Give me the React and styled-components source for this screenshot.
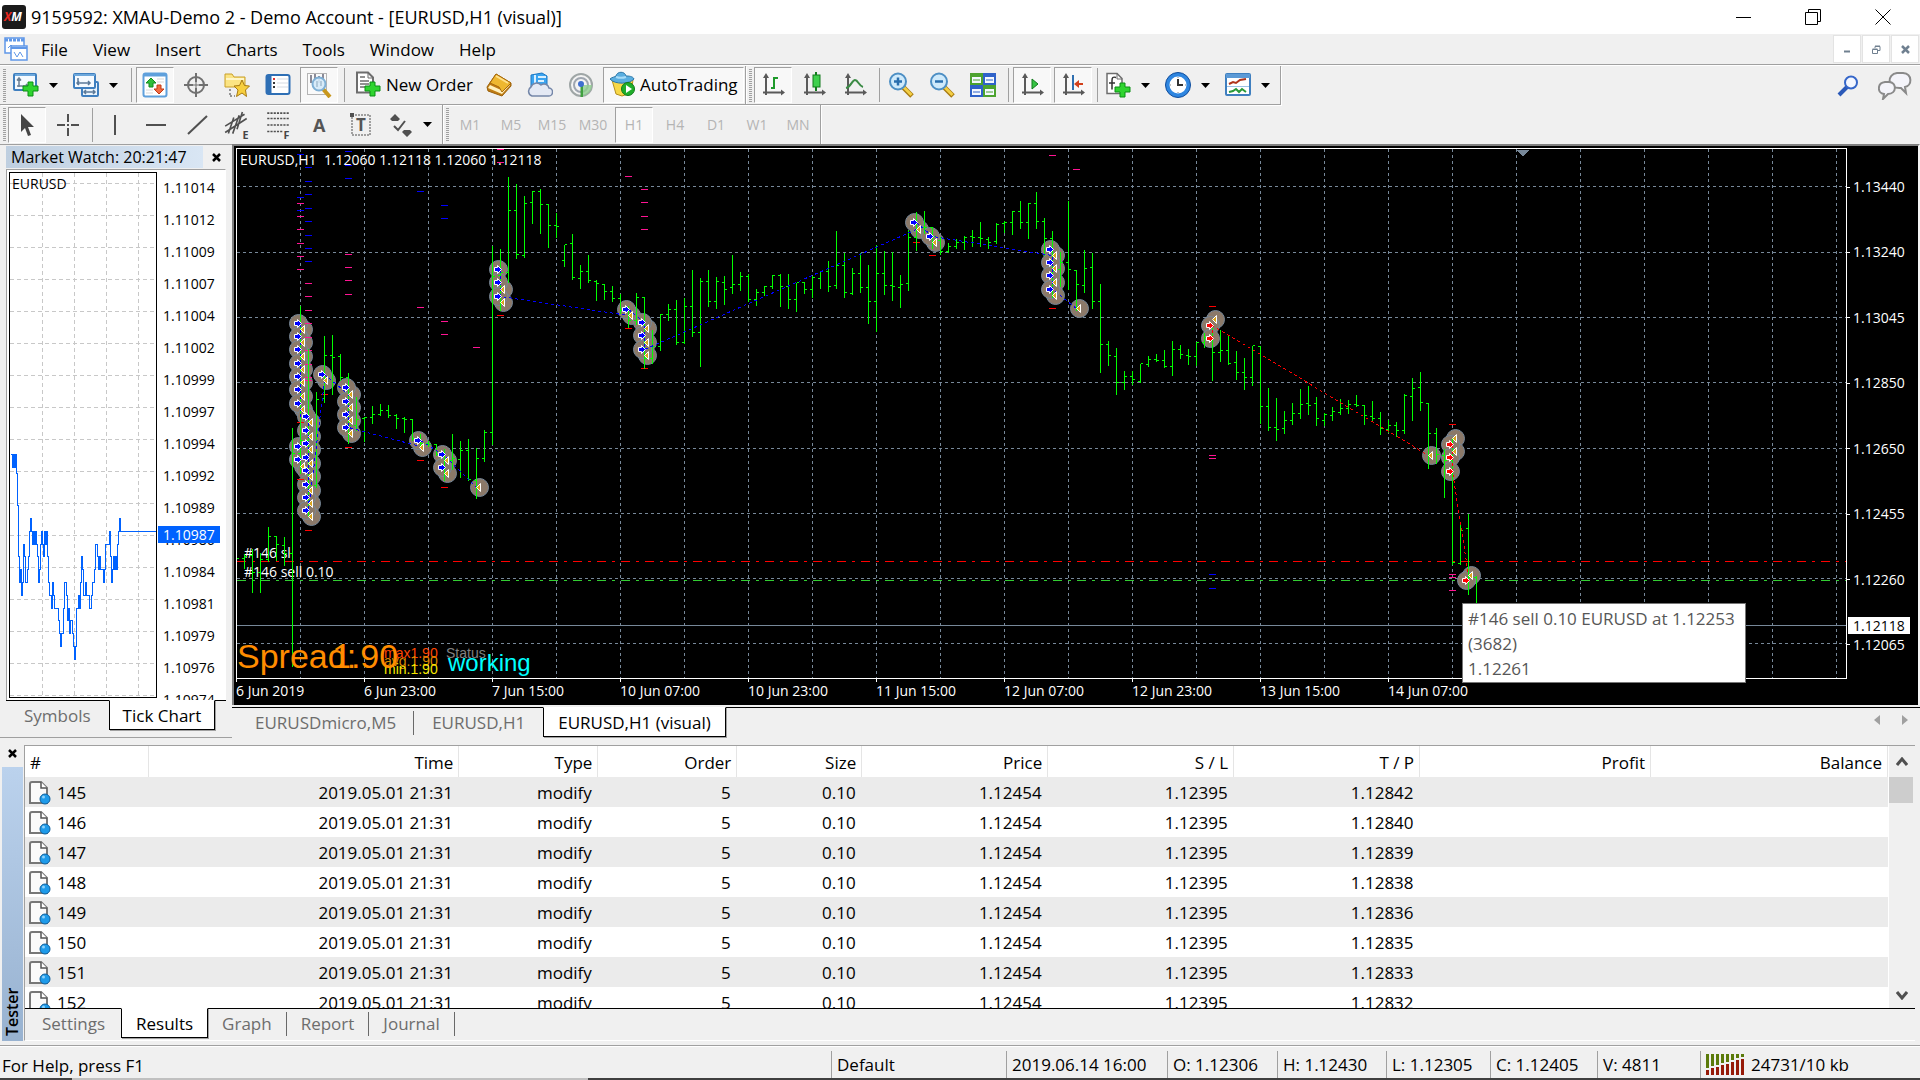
import React, {useState} from 'react';
import styled, {createGlobalStyle} from 'styled-components';

const GlobalStyle = createGlobalStyle`
  * { box-sizing: border-box; }
  body {
    margin: 0;
    background: #f0f0f0;
    color: #000;
    font-family: "Open Sans", "Noto Sans", sans-serif;
    font-size: 17px;
  }
  button {
    font: inherit;
    color: inherit;
    background: none;
    border: 0;
    padding: 0;
  }
  svg { display: block; flex: none; }
`;

const Page = styled.div`
  display: flex;
  flex-direction: column;
  height: 100vh;
  min-height: 700px;
  overflow: hidden;
`;

const TitleBar = styled.header`
  display: flex;
  align-items: center;
  height: 34px;
  flex: none;
  padding: 0 2px;
  background: #fff;
`;

const Title = styled.h1`
  flex: 1;
  margin: 0 0 0 5px;
  font-size: 18px;
  font-weight: 400;
  white-space: nowrap;
`;

const WindowButton = styled.button`
  display: flex;
  align-items: center;
  justify-content: center;
  width: 70px;
  height: 34px;
`;

const MenuBar = styled.nav`
  display: flex;
  align-items: center;
  height: 30px;
  flex: none;
  padding-left: 4px;
`;

const MenuItem = styled.button`
  padding: 2px 12px 0 13px;
  line-height: 28px;
`;

const Spacer = styled.div`
  flex: 1;
`;

const MdiButton = styled.button`
  display: flex;
  align-items: center;
  justify-content: center;
  width: 28px;
  height: 28px;
  margin-right: 1px;
  background: #fff;
  border: 1px solid #e3e3e3;
`;

const ToolRow = styled.div`
  display: flex;
  flex: none;
  height: ${p => p.$first ? 41 : 39}px;
  border-top: ${p => p.$first ? '1px solid #a0a0a0' : 'none'};
  box-shadow: ${p => p.$first ? 'inset 0 1px #fff' : 'none'};
  padding-top: ${p => p.$first ? 1 : 0}px;
`;

const ToolGroup = styled.div`
  display: flex;
  align-items: center;
  border-right: 1px solid #a0a0a0;
  border-bottom: ${p => p.$line ? '1px solid #a0a0a0' : 'none'};
  box-shadow: 1px 1px #fff;
`;

const Grip = styled.div`
  width: 3px;
  height: 33px;
  margin: 0 2px 0 3px;
  background: repeating-linear-gradient(#a0a0a0 0 1px, #f0f0f0 1px 2px);
`;

const ToolButton = styled.button`
  display: flex;
  align-items: center;
  justify-content: center;
  gap: 5px;
  min-width: 38px;
  height: 36px;
  margin-right: ${p => p.$text ? 1 : 3}px;
  padding: ${p => p.$text ? '0 5px 2px' : 0};
  border: 1px solid transparent;
  white-space: nowrap;
  ${p => p.$pressed && `
    background: #f8f8f8;
    border-color: #a0a0a0 #fff #fff #a0a0a0;
  `}
`;

const DropTool = styled.button`
  display: flex;
  align-items: center;
  gap: 10px;
  height: 36px;
  padding: 0 10px 0 5px;
`;

const Divider = styled.div`
  width: 1px;
  height: 34px;
  margin: 0 ${p => p.$wide ? 4 : 2}px 0 ${p => p.$wide ? 3 : 2}px;
  background: #a0a0a0;
`;

const Period = styled(ToolButton)`
  font-size: 14px;
  color: #b4b4b4;
`;

const SideTools = styled.div`
  display: flex;
  align-items: center;
  gap: 19px;
  margin-left: auto;
  padding-right: 8px;
`;

const Workspace = styled.main`
  display: flex;
  flex: 1;
  min-height: 0;
`;

const Watch = styled.section`
  display: flex;
  flex-direction: column;
  width: 232px;
  flex: none;
  margin-bottom: 2px;
  padding: 1px 6px 6px;
  border-top: 1px solid #a0a0a0;
  border-bottom: 1px solid #a0a0a0;
`;

const WatchHead = styled.div`
  display: flex;
  justify-content: space-between;
  align-items: center;
  height: 22px;
  flex: none;
  margin-bottom: 1px;
`;

const WatchTitle = styled.h2`
  width: 197px;
  margin: 0;
  padding-left: 5px;
  font-size: 16px;
  font-weight: 400;
  line-height: 22px;
  background: linear-gradient(90deg, #bfcfe0, #d9e6f4);
  white-space: nowrap;
`;

const CloseButton = styled.button`
  display: flex;
  align-items: center;
  justify-content: center;
  width: 20px;
  height: 20px;
`;

const WatchBody = styled.div`
  display: flex;
  flex: 1;
  min-height: 0;
  padding: 2px 0 2px 2px;
  overflow: hidden;
  background: #fff;
  border: 1px solid #a0a0a0;
  border-right-color: #fff;
  border-bottom: 0;
`;

const TickPlot = styled.div`
  flex: 1;
  overflow: hidden;
  border: 1px solid #000;
`;

const TickAxis = styled.div`
  position: relative;
  width: 68px;
  padding-left: 6px;
  font-size: 14px;
  line-height: 32px;
`;

const TickBadge = styled.div`
  position: absolute;
  left: 1px;
  top: 354px;
  width: 62px;
  padding-left: 5px;
  line-height: 17px;
  color: #fff;
  background: #0062ff;
`;

const TabBar = styled.div`
  display: flex;
  align-items: flex-start;
  height: ${p => p.$height}px;
  flex: none;
  padding-left: ${p => p.$inset || 0}px;
  border-top: 1px solid #000;
`;

const Tab = styled.button`
  height: 30px;
  margin-top: ${p => p.$active ? -1 : 0}px;
  padding: ${p => p.$active ? 1 : 0}px ${p => p.$pad}px 0;
  line-height: 26px;
  white-space: nowrap;
  color: ${p => p.$active ? '#000' : '#6d6d6d'};
  ${p => p.$active && `
    background: #fff;
    border: 1px solid #000;
    border-top-color: #fff;
    box-shadow: 1px 1px #a0a0a0;
  `}
  ${p => p.$line && `
    height: 24px;
    margin-top: 3px;
    line-height: 22px;
    border-right: 1px solid #696969;
  `}
`;

const ChartPane = styled.section`
  display: flex;
  flex-direction: column;
  flex: 1;
  min-width: 0;
`;

const ChartWindow = styled.div`
  position: relative;
  display: grid;
  grid-template-columns: 1fr 71px;
  grid-template-rows: 1fr 26px;
  flex: 1;
  min-height: 0;
  margin-bottom: 2px;
  padding: 2px 0 0 2px;
  background: #000;
  border-top: 2px solid #808080;
  border-left: 2px solid #808080;
  border-right: 2px solid #f4f4f4;
  color: #fff;
  font-size: 14px;
`;

const Plot = styled.div`
  min-width: 0;
  overflow: hidden;
`;

const PriceAxis = styled.div`
  position: relative;
  display: flex;
  flex-direction: column;
  justify-content: space-between;
  padding: 29px 0 24px;
  line-height: 20px;
`;

const Price = styled.div`
  display: flex;
  align-items: center;
  gap: 3px;
  &::before {
    content: '';
    width: 3px;
    height: 1px;
    background: #fff;
  }
`;

const PriceBadge = styled.div`
  position: absolute;
  left: 1px;
  bottom: 45px;
  width: 62px;
  padding-left: 5px;
  line-height: 17px;
  color: #000;
  background: #fff;
`;

const TimeAxis = styled.div`
  display: flex;
  overflow: hidden;
`;

const Time = styled.div`
  width: 128px;
  flex: none;
  line-height: 17px;
  &::before {
    content: '';
    display: block;
    width: 1px;
    height: 3px;
    background: #fff;
  }
`;

const Tooltip = styled.div`
  position: absolute;
  left: 1228px;
  top: 457px;
  width: 284px;
  padding: 2px 5px 1px;
  font-size: 17px;
  line-height: 25px;
  color: #575757;
  background: #fff;
  border: 1px solid #767676;
  white-space: nowrap;
`;

const TabScroll = styled.div`
  display: flex;
  gap: 8px;
  margin: 2px 5px 0 auto;
`;

const Tester = styled.section`
  display: flex;
  height: 301px;
  flex: none;
  margin: 0 5px 4px 0;
`;

const TesterSide = styled.div`
  display: flex;
  flex-direction: column;
  align-items: center;
  width: 24px;
  flex: none;
  padding-top: 3px;
`;

const TesterLabel = styled.h2`
  flex: 1;
  width: 21px;
  margin: 4px 0 0;
  padding-top: 5px;
  writing-mode: vertical-rl;
  transform: rotate(180deg);
  font-size: 16px;
  font-weight: 600;
  line-height: 21px;
  background: linear-gradient(0deg, #bbd2ed, #98b2d0);
`;

const TesterMain = styled.div`
  display: flex;
  flex-direction: column;
  flex: 1;
  min-width: 0;
  margin-top: 5px;
  border-top: 1px solid #a0a0a0;
  border-left: 1px solid #a0a0a0;
  border-bottom: 1px solid #fff;
`;

const TableArea = styled.div`
  display: flex;
  flex: 1;
  min-height: 0;
  overflow: hidden;
  background: #fff;
`;

const Table = styled.table`
  flex: 1;
  height: 0;
  table-layout: fixed;
  border-collapse: collapse;
  th {
    height: 31px;
    padding: 2px 5px 0;
    font-weight: 400;
    text-align: right;
    border-right: 1px solid #e5e5e5;
  }
  td {
    height: 30px;
    padding: 2px 6px 0;
    text-align: right;
    line-height: 28px;
  }
  th:first-child { text-align: left; }
  td:first-child { padding: 2px 3px 0; }
  tbody tr:nth-child(odd) { background: #ebebeb; }
`;

const RowName = styled.div`
  display: flex;
  align-items: center;
  gap: 6px;
`;

const ScrollBar = styled.div`
  display: flex;
  flex-direction: column;
  width: 26px;
  margin-left: 1px;
  background: #f0f0f0;
`;

const ScrollButton = styled.button`
  display: flex;
  align-items: center;
  justify-content: center;
  height: ${p => p.$low ? 27 : 31}px;
`;

const Thumb = styled.div`
  height: 26px;
  margin-right: 2px;
  background: #cdcdcd;
`;

const StatusBar = styled.footer`
  display: flex;
  height: 33px;
  flex: none;
  padding-top: 5px;
  border-top: 1px solid #a0a0a0;
  box-shadow: inset 0 1px #fff;
`;

const Cell = styled.div`
  display: flex;
  align-items: center;
  gap: 7px;
  width: ${p => p.$width}px;
  padding-left: 5px;
  border-left: 1px solid #a0a0a0;
  white-space: nowrap;
`;

const Help = styled.div`
  flex: 1;
  padding-left: 2px;
  line-height: 29px;
`;

const Edge = styled.div`
  height: 2px;
  flex: none;
  background: linear-gradient(90deg, #404040 72px, #c0c0c0 72px 588px, #404040 588px);
`;

/* icons */

const Icon = ({children, size = 26}) => (
  <svg width={size} height={size} viewBox="0 0 26 26" fill="none" aria-hidden="true">{children}</svg>
);

const Arrow = () => <svg width="9" height="5" aria-hidden="true"><path d="M0 0h9L4.500 5z" /></svg>;

const Plus = ({x = 10, y = 9}) => (
  <path transform={`translate(${x} ${y})`} d="M5 1h5v4h5v5h-5v5H5v-5H0V5h5z" fill="#2fd42f" stroke="#0a8f14" />
);

const Axes = ({children}) => (
  <Icon>
    <path d="M6 3v20M3 20.500h19" stroke="#5a5a5a" strokeWidth="2" />
    <path d="M6 1l-3 5h6zM25 20.500l-4-3v6z" fill="#5a5a5a" />
    {children}
  </Icon>
);

const Lens = ({minus}) => (
  <Icon>
    <path d="M15 15l9 9" stroke="#a87a10" strokeWidth="5" />
    <path d="M15.500 15l8 8" stroke="#f3cf45" strokeWidth="3" />
    <circle cx="10" cy="9.500" r="8" fill="#cfeafb" stroke="#4d8fc4" strokeWidth="2" />
    <path d={minus ? 'M6 9.500h8' : 'M6 9.500h8M10 5.500v8'} stroke="#2a6fae" strokeWidth="2.500" />
  </Icon>
);

const NewChart = () => (
  <Icon>
    <rect x="1" y="2" width="22" height="16" rx="1" fill="#f5faff" stroke="#3f7fbf" strokeWidth="2" />
    <path d="M2 3h20" stroke="#6da8dc" strokeWidth="2" />
    <path d="M6 6v9M4 8.500L6 6l2 2.500M4 14h11M13 12l2 2-2 2" stroke="#6c7f92" strokeWidth="1.500" />
    <Plus />
  </Icon>
);

const Profiles = () => (
  <Icon>
    <rect x="9" y="10" width="16" height="14" rx="1" fill="#eaf4fd" stroke="#3f7fbf" strokeWidth="2" />
    <path d="M11 20h11M20 18l2 2-2 2M13 18l-2 2 2 2" stroke="#5c7a99" strokeWidth="1.500" />
    <rect x="1" y="2" width="21" height="14" rx="1" fill="#f5faff" stroke="#3f7fbf" strokeWidth="2" />
    <path d="M1 3h21" stroke="#6da8dc" strokeWidth="2" />
    <path d="M5 6v7M4 11h13M6 9l-2 2 2 2M15 9l2 2-2 2" stroke="#5c7a99" strokeWidth="1.500" />
  </Icon>
);

const MarketIcon = () => (
  <Icon>
    <rect x="1.500" y="1.500" width="23" height="23" rx="2" fill="#fff" stroke="#5fa0dc" strokeWidth="2" />
    <path d="M2 3h22" stroke="#5fa0dc" strokeWidth="3" />
    <path d="M15 7h7M15 10h7M4 18h7M4 21h7" stroke="#d7d7d7" />
    <path d="M9 6l5 5h-3v4H7v-4H4z" fill="#2fbf3a" stroke="#148a20" />
    <path d="M17 22l5-5h-3v-4h-4v4h-3z" fill="#f26a42" stroke="#c23a14" />
  </Icon>
);

const Target = () => (
  <Icon>
    <circle cx="13" cy="13" r="8" stroke="#707070" strokeWidth="2" />
    <path d="M13 1v24M1 13h24" stroke="#707070" strokeWidth="2" />
    <circle cx="13" cy="13" r="3" fill="#f0f0f0" />
    <path d="M13 9v8M9 13h8" stroke="#707070" />
  </Icon>
);

const Favourite = () => (
  <Icon>
    <path d="M1 2h7l2 3h11v10H1z" fill="#fbe483" stroke="#c99f28" />
    <path d="M2 7h18" stroke="#fff6c8" strokeWidth="2" />
    <path d="M6 17v8M6 24h5" stroke="#777" strokeWidth="1.500" strokeDasharray="2 2" />
    <path d="M18 8l2.500 5.500 5 .5-4 4 1 6.500-4.500-3.500-5.500 3.500 1.500-6.500-4-4 5.500-.5z" fill="#f7cf3e" stroke="#a77a12" />
  </Icon>
);

const Navigator = () => (
  <Icon>
    <rect x="1.500" y="3" width="23" height="19" rx="2" fill="#fff" stroke="#2e6fb5" strokeWidth="2" />
    <path d="M4 4v18" stroke="#2e6fb5" strokeWidth="5" />
    <path d="M8 7h2" stroke="#e03131" strokeWidth="2" />
    <path d="M8 11h2M8 15h2" stroke="#333" strokeWidth="2" />
    <path d="M12 7h11M12 11h11M12 15h11" stroke="#d6dbe2" />
  </Icon>
);

const DataWindow = () => (
  <Icon>
    <rect x="1.500" y="1.500" width="19" height="21" fill="#fafafa" stroke="#b4b4b4" />
    <path d="M5 3v8M9 2v7M13 4v7M17 2v6" stroke="#667" strokeWidth="1.500" />
    <path d="M17 17l7 8" stroke="#c8971c" strokeWidth="4" />
    <circle cx="13" cy="12" r="6.500" fill="#d4e9f8" fillOpacity=".9" stroke="#7fb0d6" strokeWidth="2" />
    <path d="M11 9v6M15 9v5" stroke="#8ba7bd" />
  </Icon>
);

const OrderIcon = () => (
  <Icon>
    <path d="M2 1.500h11l5 5v15H2z" fill="#fff" stroke="#6d6d6d" strokeWidth="2" />
    <path d="M13 1v6h5" stroke="#6d6d6d" />
    <path d="M5 6h5M5 10h9M5 13h9M5 16h5" stroke="#6d6d6d" strokeWidth="1.500" />
    <Plus x={10} y={10} />
  </Icon>
);

const Book = () => (
  <Icon>
    <path d="M10 2L1 15l1 4 14 5 9-10v-3z" fill="#c07c12" stroke="#9a610a" />
    <path d="M2 16l14 6 8-9-1-2-8 7-11-5z" fill="#fff0bd" />
    <path d="M10 2l15 9-9 9-3-5L4 11z" fill="#eeb730" stroke="#a8690d" />
    <path d="M10 4l12 7" stroke="#ffe08a" strokeWidth="2" />
  </Icon>
);

const Cloud = () => (
  <Icon>
    <path d="M4 3l11-2 5 3v11H4z" fill="#3ba4f0" stroke="#1c78c4" />
    <path d="M8 3v10M11 5h8M11 9h6" stroke="#d9f0ff" strokeWidth="2" />
    <path d="M5 24a5 5 0 01-1-9 6 6 0 0110-2 5 5 0 018 3 4 4 0 01-1 8z" fill="#e4e9f4" stroke="#7486a8" strokeWidth="1.500" />
  </Icon>
);

const Signal = () => (
  <Icon>
    <circle cx="13" cy="13" r="11" fill="#f3f3f3" stroke="#9fa6a6" strokeWidth="2" />
    <circle cx="13" cy="13" r="7" stroke="#9fa6b0" strokeWidth="2" />
    <path d="M13 13h11a11 11 0 01-10 11z" fill="#8fce8f" fillOpacity=".8" />
    <path d="M12.500 13v12h2.500V13z" fill="#3fa03f" />
    <circle cx="13" cy="12" r="3" fill="#3f6fd0" />
  </Icon>
);

const Expert = () => (
  <Icon>
    <path d="M3 9l4 14 6 2 9-3 2-13z" fill="#f7d848" stroke="#b58f1c" />
    <path d="M1 8c2-2 5-2 6-3 1-5 9-5 10 0 2 0 7 0 8 3-4 5-19 6-24 0z" fill="#5aaee0" stroke="#2c77a8" />
    <path d="M7 6c3 1 7 1 10 0" stroke="#a8dcf7" strokeWidth="2" />
    <circle cx="19" cy="18" r="6.500" fill="#1fae2a" stroke="#0d7a16" />
    <path d="M17 14l6 4-6 4z" fill="#fff" />
  </Icon>
);

const Tiles = () => (
  <Icon>
    {[[0, 1, '#4da32f'], [13, 1, '#2f62c9'], [0, 13, '#2f62c9'], [13, 13, '#4da32f']].map(([x, y, c]) => (
      <g key={`${x} ${y}`}>
        <rect x={x} y={y} width="13" height="12" fill={c} />
        <rect x={x + 2} y={y + 4} width="9" height="6" fill="#f4f8ff" />
        <path d={`M${x + 3} ${y + 7}h7`} stroke={c} />
      </g>
    ))}
  </Icon>
);

const Indicators = () => (
  <Icon>
    <path d="M2 1.500h10l5 5v15H2z" fill="#fff" stroke="#6d6d6d" strokeWidth="1.500" />
    <path d="M12 1v6h5" stroke="#6d6d6d" />
    <path d="M11 5.500c-3-1-4 0-4 3v9M4 11h6" stroke="#333" strokeWidth="1.500" />
    <Plus x={10} y={10} />
  </Icon>
);

const Clock = () => (
  <Icon>
    <circle cx="13" cy="13" r="10.500" fill="#fff" stroke="#2f86e0" strokeWidth="4" />
    <circle cx="13" cy="13" r="12.500" stroke="#0f4c9c" />
    <path d="M13 7v6h5" stroke="#333" strokeWidth="2" />
    <path d="M13 5v1M13 20v1M5 13h1M20 13h1" stroke="#888" />
  </Icon>
);

const Template = () => (
  <Icon>
    <rect x="1" y="2" width="24" height="21" rx="1" fill="#fff" stroke="#3f7fbf" strokeWidth="2" />
    <path d="M1 4h24" stroke="#5c9ad6" strokeWidth="4" />
    <path d="M2 14.500h22" stroke="#9cc3e6" />
    <path d="M4 12l4-2 3 1 4-3 6-1" stroke="#b0351b" strokeWidth="2" />
    <path d="M4 20l4-1 3-2 3 3 3-3 4 3" stroke="#2a9a3a" strokeWidth="2" />
  </Icon>
);

const Cursor = () => <Icon><path d="M7 2v18l4-4 3 8 3-1-3-8h6z" fill="#454545" /></Icon>;
const Cross = () => <Icon><path d="M13 2v8M13 16v8M2 13h8M16 13h8M12 13h2" stroke="#505050" strokeWidth="2" /></Icon>;
const VLine = () => <Icon><path d="M14 3v20" stroke="#505050" strokeWidth="2" /></Icon>;
const HLine = () => <Icon><path d="M4 13h20" stroke="#505050" strokeWidth="2" /></Icon>;
const Trend = () => <Icon><path d="M5 22L24 4" stroke="#505050" strokeWidth="2" /></Icon>;

const Channel = () => (
  <Icon size={28}>
    <path d="M2 14L20 3M2 20L22 7M5 21L10 6M9 21L15 4M13 17l5-16" stroke="#505050" strokeWidth="1.500" />
    <text x="18" y="26" fontSize="10" fontWeight="700" fill="#454545">E</text>
  </Icon>
);

const Fibo = () => (
  <Icon size={28}>
    <path d="M3 2h20M3 7h20M3 13h20M3 19h14" stroke="#505050" strokeWidth="1.500" strokeDasharray="2 1" />
    <text x="18" y="26" fontSize="10" fontWeight="700" fill="#454545">F</text>
  </Icon>
);

const Letter = () => <Icon><text x="7" y="20" fontSize="18" fontWeight="700" fill="#555">A</text></Icon>;

const Label = () => (
  <Icon>
    <rect x="5" y="3" width="18" height="20" stroke="#505050" strokeDasharray="2 1" />
    <path d="M3 1h4v4H3z" fill="#505050" />
    <text x="9" y="19" fontSize="17" fontWeight="700" fill="#555">T</text>
  </Icon>
);

const Shapes = () => (
  <Icon>
    <path d="M8 2l5 5-2 2H5L3 7zM20 25l-5-5 2-2h6l2 2z" fill="#505050" />
    <path d="M7 14l4 4 7-9" stroke="#505050" strokeWidth="2" />
  </Icon>
);

const Cross8 = ({color = '#000'}) => (
  <svg width="9" height="9" aria-hidden="true"><path d="M1 1l7 7M8 1L1 8" stroke={color} strokeWidth="2.500" /></svg>
);

const DocIcon = () => (
  <svg width="23" height="26" viewBox="0 0 23 26" fill="none" aria-hidden="true">
    <path d="M2 4a2 2 0 012-2h9l6 6v15H2z" fill="#fafafa" stroke="#777" strokeWidth="2" />
    <path d="M13 2v6h6" fill="#fff" stroke="#555" strokeWidth="1.500" />
    <circle cx="17" cy="19" r="5" fill="#1e9bea" stroke="#0f5f9c" />
    <circle cx="15.500" cy="17" r="1.500" fill="#8fd2fa" />
  </svg>
);

/* chart data: [high, low, open, close] on the vertical scale of the plot, one bar every 8px */
const TOP = 148;
const LEFT = 236;
const BARS = [
  [558, 569, 558, 558], [553, 568, 558, 556], [548, 592, 555, 572], [552, 592, 572, 559],
  [526, 561, 559, 536], [536, 560, 536, 544], [536, 565, 545, 553], [427, 666, 553, 453],
  [305, 473, 453, 440], [348, 516, 440, 485], [391, 487, 485, 399], [335, 402, 398, 355],
  [334, 394, 355, 357], [353, 380, 356, 377], [372, 443, 377, 425], [396, 430, 425, 419],
  [416, 441, 418, 417], [405, 423, 417, 414], [403, 415, 414, 410], [404, 417, 410, 415],
  [413, 428, 415, 418], [416, 432, 418, 419], [418, 440, 419, 438], [433, 448, 438, 443],
  [440, 446, 443, 444], [443, 455, 444, 454], [448, 480, 454, 460], [433, 469, 460, 458],
  [440, 477, 459, 450], [438, 480, 450, 479], [447, 498, 480, 458], [429, 461, 458, 432],
  [245, 444, 432, 276], [248, 310, 275, 272], [176, 282, 272, 210], [183, 258, 210, 254],
  [195, 257, 255, 203], [190, 223, 202, 191], [188, 233, 191, 204], [204, 247, 204, 225],
  [212, 237, 225, 226], [244, 266, 260, 244], [233, 279, 243, 277], [264, 288, 278, 271],
  [254, 282, 271, 280], [279, 300, 281, 283], [283, 299, 284, 291], [285, 301, 291, 298],
  [293, 313, 298, 310], [305, 327, 310, 320], [292, 324, 320, 297], [297, 368, 297, 358],
  [329, 363, 358, 346], [313, 350, 346, 314], [303, 320, 314, 309], [299, 344, 309, 342],
  [297, 343, 342, 306], [269, 336, 306, 332], [277, 366, 332, 281], [269, 306, 281, 301],
  [276, 308, 301, 281], [275, 304, 282, 289], [254, 293, 287, 284], [271, 290, 284, 276],
  [273, 301, 276, 299], [288, 305, 299, 292], [285, 295, 292, 286], [274, 288, 286, 275],
  [273, 306, 275, 286], [273, 308, 286, 299], [282, 311, 299, 282], [281, 293, 282, 289],
  [275, 297, 289, 277], [271, 288, 278, 271], [260, 291, 271, 286], [230, 288, 285, 265],
  [252, 297, 265, 292], [267, 294, 293, 273], [252, 292, 273, 287], [264, 323, 287, 301],
  [244, 331, 301, 273], [250, 294, 273, 285], [251, 300, 285, 286], [274, 307, 287, 284],
  [229, 290, 283, 237], [211, 250, 237, 228], [210, 233, 227, 227], [226, 248, 227, 236],
  [236, 254, 240, 251], [242, 252, 251, 246], [238, 248, 246, 242], [235, 249, 242, 237],
  [229, 246, 236, 237], [221, 246, 237, 238], [236, 248, 239, 242], [222, 243, 241, 224],
  [220, 232, 223, 222], [210, 234, 222, 211], [200, 228, 211, 222], [202, 238, 222, 203],
  [191, 228, 203, 221], [217, 255, 221, 238], [230, 297, 238, 270], [251, 286, 269, 262],
  [200, 289, 262, 269], [269, 310, 270, 284], [249, 292, 285, 268], [252, 308, 267, 301],
  [283, 372, 301, 344], [340, 365, 344, 355], [347, 394, 356, 382], [370, 389, 382, 376],
  [370, 384, 376, 379], [363, 382, 381, 363], [355, 366, 364, 359], [353, 361, 359, 360],
  [349, 367, 360, 366], [340, 375, 366, 349], [344, 358, 349, 354], [348, 364, 355, 356],
  [341, 365, 356, 342], [332, 347, 342, 337], [327, 380, 337, 352], [329, 361, 352, 350],
  [334, 364, 350, 363], [350, 379, 362, 372], [357, 389, 372, 377], [345, 385, 377, 345],
  [346, 423, 346, 406], [387, 430, 406, 427], [397, 440, 427, 429], [410, 433, 428, 420],
  [402, 424, 420, 413], [388, 418, 413, 404], [385, 414, 403, 405], [396, 425, 403, 418],
  [412, 425, 420, 414], [406, 420, 415, 411], [398, 414, 412, 408], [399, 413, 408, 404],
  [394, 406, 404, 405], [404, 424, 405, 415], [400, 420, 416, 418], [411, 434, 418, 428],
  [419, 432, 429, 425], [421, 436, 425, 430], [393, 433, 430, 395], [377, 420, 396, 388],
  [371, 410, 387, 402], [403, 468, 403, 433], [427, 463, 433, 454], [448, 497, 455, 460],
  [437, 564, 460, 562], [521, 564, 563, 530], [513, 594, 528, 577], [575, 640, 577, 625],
];

// x, then the y of every marker in that column
const BUYS = [
  [298, 323, 336, 349, 363, 376, 389, 403, 446, 459],
  [306, 416, 430, 443, 457, 470, 484, 497, 510],
  [322, 374], [346, 387, 401, 414, 427], [418, 440], [442, 454, 467],
  [498, 269, 282, 296], [626, 309], [642, 322, 335, 349], [914, 222], [930, 236],
  [1050, 249, 262, 275, 289],
];
const SELLS = [[1210, 325, 338], [1450, 444, 457, 471], [1466, 580]];
const EXITS = [
  [303, 329, 342, 356, 369, 382, 396, 409, 466],
  [311, 422, 436, 449, 463, 476, 490, 503, 516],
  [326, 380], [351, 394, 407, 420, 433], [422, 447], [447, 460, 473], [479, 487],
  [503, 289, 302], [631, 315], [647, 328, 342, 355], [919, 229], [935, 242],
  [1055, 255, 268, 282, 295], [1079, 308], [1215, 319], [1431, 455], [1455, 438, 451], [1471, 575],
];
const DASHES = {
  '#0000ff': [
    [300, 154, 197, 210], [308, 167, 181, 194, 208, 221, 235, 248, 261], [348, 151, 165, 178],
    [420, 191], [444, 205, 218], [1212, 574, 588],
  ],
  '#ff1493': [
    [300, 203, 216, 229, 243, 256, 269], [308, 283, 296, 310, 323, 337, 350, 364, 377, 380],
    [348, 254, 267, 280, 294], [420, 307], [444, 321, 334], [476, 347], [500, 149, 162],
    [628, 176], [644, 189, 202, 216, 229], [1052, 155], [1076, 169], [1212, 455, 458],
    [1452, 574, 577, 590],
  ],
  '#ff0000': [
    [300, 422, 479], [308, 530], [324, 394], [348, 447], [420, 460], [444, 487], [500, 315],
    [628, 328], [644, 368], [916, 242], [932, 255], [1052, 308], [1212, 306], [1452, 424],
  ],
};
const BUY_LINES = 'M300 323V416M308 416V510L324 380M324 374L348 394V427L420 446M420 440L444 455L476 487M500 269V296L628 315M628 309L644 322V349L916 229M916 222L932 236L1052 255V289L1076 308';
const SELL_LINES = 'M1212 338V325L1428 455M1452 444V471L1468 575';

const PRICES = ['1.13440', '1.13240', '1.13045', '1.12850', '1.12650', '1.12455', '1.12260', '1.12065'];
const PRICE_LINES = [186, 252, 317, 382, 448, 513, 578, 643];
const TIMES = [
  '6 Jun 2019', '6 Jun 23:00', '7 Jun 15:00', '10 Jun 07:00', '10 Jun 23:00',
  '11 Jun 15:00', '12 Jun 07:00', '12 Jun 23:00', '13 Jun 15:00', '14 Jun 07:00',
];

const TICK_PRICES = [
  '1.11014', '1.11012', '1.11009', '1.11007', '1.11004', '1.11002', '1.10999', '1.10997', '1.10994',
  '1.10992', '1.10989', '1.10986', '1.10984', '1.10981', '1.10979', '1.10976', '1.10974',
];
const TICKS = [
  0, 0, 1, 0, 1, 0, 1.5, 4, 8, 10, 9, 11, 10, 7, 8, 10, 10, 9, 8, 6, 5, 6, 7, 6, 7, 6, 7, 8, 10, 9,
  7, 6, 7, 8, 6, 7, 6, 8, 10, 11, 11, 12, 10, 11, 12, 12, 12, 12, 13, 14, 15, 14, 14, 12, 10, 10, 11,
  13, 12, 14, 13, 13, 14, 15, 16, 15, 12, 12, 11, 12, 10, 8, 9, 11, 11, 10, 11, 11, 11, 12, 12, 11,
  10, 10, 9, 7, 7, 8, 9, 8, 9, 9, 9, 10, 9, 7, 7, 7, 7, 6, 8, 10, 9, 8, 9, 8, 9, 7, 6, 5, 6,
];

const each = (groups, draw) => groups.flatMap(([x, ...ys]) => ys.map(y => draw(x, y)));

const TickChart = () => {
  const line = TICKS.map((n, i) => `${i ? `H${i}V` : `M0 `}${Math.round(281 + n * 12.8)}`).join('');
  return (
    <svg width="100%" height="100%" fill="none" shapeRendering="crispEdges">
      <g stroke="#c8c8c8" strokeDasharray="4 3">
        {[32, 64, 96, 128].map(x => <line key={x} x1={x + .5} x2={x + .5} y1="0" y2="100%" />)}
        {TICK_PRICES.map((p, i) => <line key={p} x1="0" x2="100%" y1={i * 32 + 10.5} y2={i * 32 + 10.5} />)}
      </g>
      <path d={`${line}H400`} stroke="#0062ff" transform="translate(.5 .5)" />
      <text x="2" y="16" fill="#000" fontSize="14">EURUSD</text>
    </svg>
  );
};

const PriceChart = () => (
  <svg width="100%" height="100%" fill="none">
    <g transform={`translate(${-LEFT + .5} ${-TOP + .5})`} shapeRendering="crispEdges">
      <g stroke="#778899" strokeDasharray="3 3">
        {Array.from({length: 25}, (_, i) => 300 + i * 64).map(x => (
          <line key={x} x1={x} x2={x} y1={TOP} y2="3000" />
        ))}
        {PRICE_LINES.map(y => <line key={y} x1={LEFT} x2="6000" y1={y} y2={y} />)}
      </g>
      <path d={`M${LEFT} 625H6000`} stroke="#778899" />
      <path d={`M${LEFT} 561H6000`} stroke="#f00" strokeDasharray="9 6 3 6" />
      <path d={`M${LEFT} 580H6000`} stroke="#32cd32" strokeDasharray="9 6 3 6" />
      <path d="M1515 149h14l-7 7z" fill="#778899" />
    </g>
    <g transform={`translate(${-LEFT} ${-TOP})`} fill="#fff" fontSize="14">
      <text x="240" y="165" xmlSpace="preserve">EURUSD,H1  1.12060 1.12118 1.12060 1.12118</text>
      <text x="244" y="558">#146 sl</text>
      <text x="244" y="577">#146 sell 0.10</text>
    </g>
    <g transform={`translate(${-LEFT + .5} ${-TOP + .5})`}>
      {each([...EXITS, ...BUYS, ...SELLS], (x, y) => (
        <circle key={`${x} ${y}`} cx={x} cy={y} r="9" fill="#8b7969" stroke="#778899" />
      ))}
      <g shapeRendering="crispEdges">
        {Object.entries(DASHES).map(([color, groups]) => (
          <path key={color} stroke={color} d={each(groups, (x, y) => `M${x - 3.5} ${y}h7`).join('')} />
        ))}
        <path
          stroke="#0f0"
          d={BARS.map(([high, low, open, close], i) => {
            const x = LEFT + i * 8;
            return `M${x} ${high}V${low}M${x - 2.5} ${open}H${x}M${x} ${close}h2.500`;
          }).join('')}
        />
        <path d={BUY_LINES} stroke="#00f" strokeDasharray="3 3" />
        <path d={SELL_LINES} stroke="#f00" strokeDasharray="3 3" />
      </g>
      <g stroke="#fff" strokeWidth="1">
        {each(EXITS, (x, y) => <path key={`${x} ${y}`} d={`M${x - 3} ${y}l4-4v8z`} fill="#daa520" />)}
        {each(BUYS, (x, y) => (
          <path key={`${x} ${y}`} d={`M${x - 4} ${y - 2}h3v-2l4 4-4 4v-2h-3z`} fill="#00f" />
        ))}
        {each(SELLS, (x, y) => (
          <path key={`${x} ${y}`} d={`M${x - 4} ${y - 2}h3v-2l4 4-4 4v-2h-3z`} fill="#f00" />
        ))}
      </g>
    </g>
    <g transform={`translate(${-LEFT} ${-TOP})`} fontFamily="Liberation Sans, Arial, sans-serif" fontSize="14">
      <text x="384" y="658" fill="#ff4500">max1.90</text>
      <text x="384" y="666" fill="#d98a00">avg.1.90</text>
      <text x="384" y="674" fill="#f5e800">min.1.90</text>
      <text x="446" y="658" fill="#808080">Status</text>
      <text x="448" y="671" fill="#0ff" fontSize="24">working</text>
      <g fill="#ff8c00" fontSize="34">
        <text x="237" y="668">Spread:</text>
        <text x="332" y="668">1.90</text>
      </g>
    </g>
    <g stroke="#fff" strokeWidth="2">
      <rect width="100%" height="100%" />
    </g>
  </svg>
);

const COLUMNS = [
  ['#', 124], ['Time', 310], ['Type', 139], ['Order', 139], ['Size', 125],
  ['Price', 186], ['S / L', 186], ['T / P', 186], ['Profit', 231], ['Balance', 237],
];
const TAKE_PROFITS = ['1.12842', '1.12840', '1.12839', '1.12838', '1.12836', '1.12835', '1.12833', '1.12832'];

const Results = () => (
  <TableArea>
    <Table>
      <colgroup>{COLUMNS.map(([name, width]) => <col key={name} width={width} />)}</colgroup>
      <thead>
        <tr>{COLUMNS.map(([name]) => <th key={name} scope="col">{name}</th>)}</tr>
      </thead>
      <tbody>
        {TAKE_PROFITS.map((tp, i) => (
          <tr key={tp}>
            <td><RowName><DocIcon />{145 + i}</RowName></td>
            <td>2019.05.01 21:31</td>
            <td>modify</td>
            <td>5</td>
            <td>0.10</td>
            <td>1.12454</td>
            <td>1.12395</td>
            <td>{tp}</td>
            <td></td>
            <td></td>
          </tr>
        ))}
      </tbody>
    </Table>
    <ScrollBar>
      <ScrollButton aria-label="Scroll up">
        <svg width="12" height="10" fill="none"><path d="M1 8l5-6 5 6" stroke="#505050" strokeWidth="3" /></svg>
      </ScrollButton>
      <Thumb />
      <Spacer />
      <ScrollButton $low aria-label="Scroll down">
        <svg width="12" height="10" fill="none"><path d="M1 2l5 6 5-6" stroke="#505050" strokeWidth="3" /></svg>
      </ScrollButton>
    </ScrollBar>
  </TableArea>
);

const StandardTools = () => (
  <ToolRow $first>
    <ToolGroup $line>
      <Grip />
      <DropTool aria-label="New chart"><NewChart /><Arrow /></DropTool>
      <DropTool aria-label="Profiles"><Profiles /><Arrow /></DropTool>
      <Divider $wide />
      <ToolButton $pressed aria-label="Market Watch"><MarketIcon /></ToolButton>
      <ToolButton aria-label="Data Window"><Target /></ToolButton>
      <ToolButton aria-label="Navigator"><Favourite /></ToolButton>
      <ToolButton aria-label="Terminal"><Navigator /></ToolButton>
      <ToolButton $pressed aria-label="Strategy Tester"><DataWindow /></ToolButton>
      <Divider $wide />
      <ToolButton $text><OrderIcon />New Order</ToolButton>
      <ToolButton aria-label="MetaEditor"><Book /></ToolButton>
      <ToolButton aria-label="Hosting"><Cloud /></ToolButton>
      <ToolButton aria-label="Signals"><Signal /></ToolButton>
      <ToolButton $text $pressed><Expert />AutoTrading</ToolButton>
    </ToolGroup>
    <ToolGroup $line>
      <Grip />
      <ToolButton $pressed aria-label="Bar chart">
        <Axes><path d="M14 5v12M14 6h4M11 16h3" stroke="#1f9a2b" strokeWidth="2" /></Axes>
      </ToolButton>
      <ToolButton aria-label="Candlesticks">
        <Axes><path d="M15 0v19" stroke="#137a1d" strokeWidth="2" /><rect x="12" y="3" width="7" height="12" fill="#3fd04d" stroke="#137a1d" /></Axes>
      </ToolButton>
      <ToolButton aria-label="Line chart">
        <Axes><path d="M4 16c5-1 6-8 9-8s4 6 8 7" stroke="#3a8a44" strokeWidth="2" /></Axes>
      </ToolButton>
      <Divider />
      <ToolButton aria-label="Zoom in"><Lens /></ToolButton>
      <ToolButton aria-label="Zoom out"><Lens minus /></ToolButton>
      <ToolButton aria-label="Tile windows"><Tiles /></ToolButton>
      <Divider $wide />
      <ToolButton $pressed aria-label="Auto scroll">
        <Axes><path d="M13 7l6 5-6 5z" fill="#35c343" stroke="#137a1d" /></Axes>
      </ToolButton>
      <ToolButton $pressed aria-label="Chart shift">
        <Axes><path d="M13 3v15" stroke="#2f6fb0" strokeWidth="2" /><path d="M14 12l5-4v3h4v2h-4v3z" fill="#d2401b" /></Axes>
      </ToolButton>
      <Divider />
      <DropTool aria-label="Indicators"><Indicators /><Arrow /></DropTool>
      <DropTool aria-label="Periods"><Clock /><Arrow /></DropTool>
      <DropTool aria-label="Templates"><Template /><Arrow /></DropTool>
    </ToolGroup>
    <SideTools>
      <button aria-label="Search">
        <svg width="22" height="22" fill="none">
          <path d="M10 12l-8 8" stroke="#2b59b8" strokeWidth="4" />
          <circle cx="14" cy="7.500" r="6" fill="#f4f7ff" stroke="#3566c9" strokeWidth="2" />
        </svg>
      </button>
      <button aria-label="Messages">
        <svg width="34" height="28" fill="none" stroke="#8a8a8a" strokeWidth="2">
          <path d="M19 1h6c10 1 9 13 2 14l1 6-5-5c-15 1-14-14-4-15z" fill="#f4f4fa" />
          <path d="M7 10c-8 1-8 11-1 12l-1 5 5-5c9 0 9-12 1-12z" fill="#f4f4fa" />
        </svg>
      </button>
    </SideTools>
  </ToolRow>
);

const PERIODS = ['M1', 'M5', 'M15', 'M30', 'H1', 'H4', 'D1', 'W1', 'MN'];

const LineTools = () => {
  const [period, setPeriod] = useState('H1');
  return (
    <ToolRow>
      <ToolGroup>
        <Grip />
        <ToolButton $pressed aria-label="Cursor"><Cursor /></ToolButton>
        <ToolButton aria-label="Crosshair"><Cross /></ToolButton>
        <Divider />
        <ToolButton aria-label="Vertical line"><VLine /></ToolButton>
        <ToolButton aria-label="Horizontal line"><HLine /></ToolButton>
        <ToolButton aria-label="Trendline"><Trend /></ToolButton>
        <ToolButton aria-label="Equidistant channel"><Channel /></ToolButton>
        <ToolButton aria-label="Fibonacci"><Fibo /></ToolButton>
        <ToolButton aria-label="Text"><Letter /></ToolButton>
        <ToolButton aria-label="Text label"><Label /></ToolButton>
        <DropTool aria-label="Arrows"><Shapes /><Arrow /></DropTool>
      </ToolGroup>
      <ToolGroup>
        <Grip />
        {PERIODS.map(p => (
          <Period key={p} $pressed={p === period} onClick={() => setPeriod(p)}>{p}</Period>
        ))}
      </ToolGroup>
    </ToolRow>
  );
};

const App = () => (
  <Page>
    <GlobalStyle />
    <TitleBar>
      <svg width="24" height="24">
        <rect width="24" height="24" rx="3" fill="#1b1b1b" />
        <text x="2" y="16" fontSize="12" fontWeight="700" fontStyle="italic" fill="#fff">
          <tspan fill="#e5261f">X</tspan>M
        </text>
      </svg>
      <Title>9159592: XMAU-Demo 2 - Demo Account - [EURUSD,H1 (visual)]</Title>
      <WindowButton aria-label="Minimize">
        <svg width="15" height="15"><path d="M0 7.500h15" stroke="#000" /></svg>
      </WindowButton>
      <WindowButton aria-label="Restore">
        <svg width="16" height="16" fill="none" stroke="#000">
          <path d="M.5 3.500h12v12H.5zM3.500 3V.5h12v12H13" />
        </svg>
      </WindowButton>
      <WindowButton aria-label="Close">
        <svg width="16" height="16"><path d="M.5.5l15 15M15.500.5l-15 15" stroke="#000" /></svg>
      </WindowButton>
    </TitleBar>
    <MenuBar>
      <svg width="24" height="24" fill="none" stroke="#5f97e8">
        <rect x="1" y="1" width="19" height="15" fill="#fff" strokeWidth="1.500" />
        <path d="M1 3h19" strokeWidth="3" strokeDasharray="3 1" />
        <path d="M4 11l3-3 3 3 3-2" />
        <rect x="7" y="9" width="16" height="14" fill="#fff" strokeWidth="1.500" />
        <path d="M7 11h16" strokeWidth="2" />
        <path d="M10 15l3 5 3-5 3 5" />
      </svg>
      {['File', 'View', 'Insert', 'Charts', 'Tools', 'Window', 'Help'].map(m => <MenuItem key={m}>{m}</MenuItem>)}
      <Spacer />
      <MdiButton aria-label="Minimize chart">
        <svg width="8" height="8"><path d="M1 6.500h6" stroke="#708090" strokeWidth="2" /></svg>
      </MdiButton>
      <MdiButton aria-label="Restore chart">
        <svg width="9" height="9" fill="none" stroke="#708090">
          <path d="M.5 4.500h5v4h-5zM.5 4h5M3 3V1.500h5v4H6M3 1h5" />
        </svg>
      </MdiButton>
      <MdiButton aria-label="Close chart"><Cross8 color="#708090" /></MdiButton>
    </MenuBar>
    <StandardTools />
    <LineTools />
    <Workspace>
      <Watch>
        <WatchHead>
          <WatchTitle>Market Watch: 20:21:47</WatchTitle>
          <CloseButton aria-label="Close Market Watch"><Cross8 /></CloseButton>
        </WatchHead>
        <WatchBody>
          <TickPlot><TickChart /></TickPlot>
          <TickAxis>
            {TICK_PRICES.map(p => <div key={p}>{p}</div>)}
            <TickBadge>1.10987</TickBadge>
          </TickAxis>
        </WatchBody>
        <TabBar $height={31}>
          <Tab $pad={18}>Symbols</Tab>
          <Tab $pad={13} $active>Tick Chart</Tab>
        </TabBar>
      </Watch>
      <ChartPane>
        <ChartWindow>
          <Plot><PriceChart /></Plot>
          <PriceAxis>
            {PRICES.map(p => <Price key={p}>{p}</Price>)}
            <PriceBadge>1.12118</PriceBadge>
          </PriceAxis>
          <TimeAxis>{TIMES.map(t => <Time key={t}>{t}</Time>)}</TimeAxis>
          <Tooltip>
            #146 sell 0.10 EURUSD at 1.12253<br />(3682)<br />1.12261
          </Tooltip>
        </ChartWindow>
        <TabBar $height={33} $inset={6}>
          <Tab $pad={17} $line>EURUSDmicro,M5</Tab>
          <Tab $pad={18}>EURUSD,H1</Tab>
          <Tab $pad={14} $active>EURUSD,H1 (visual)</Tab>
          <TabScroll>
            <CloseButton aria-label="Previous tab">
              <svg width="6" height="10"><path d="M6 0v10L0 5z" fill="#a0a0a0" /></svg>
            </CloseButton>
            <CloseButton aria-label="Next tab">
              <svg width="6" height="10"><path d="M0 0v10l6-5z" fill="#a0a0a0" /></svg>
            </CloseButton>
          </TabScroll>
        </TabBar>
      </ChartPane>
    </Workspace>
    <Tester>
      <TesterSide>
        <CloseButton aria-label="Close Tester"><Cross8 /></CloseButton>
        <TesterLabel>Tester</TesterLabel>
      </TesterSide>
      <TesterMain>
        <Results />
        <TabBar $height={32} $inset={1}>
          <Tab $pad={16}>Settings</Tab>
          <Tab $pad={14} $active>Results</Tab>
          <Tab $pad={14} $line>Graph</Tab>
          <Tab $pad={14} $line>Report</Tab>
          <Tab $pad={14} $line>Journal</Tab>
        </TabBar>
      </TesterMain>
    </Tester>
    <StatusBar>
      <Help>For Help, press F1</Help>
      <Cell $width={175}>Default</Cell>
      <Cell $width={161}>2019.06.14 16:00</Cell>
      <Cell $width={110}>O: 1.12306</Cell>
      <Cell $width={109}>H: 1.12430</Cell>
      <Cell $width={104}>L: 1.12305</Cell>
      <Cell $width={107}>C: 1.12405</Cell>
      <Cell $width={103}>V: 4811</Cell>
      <Cell $width={220}>
        <svg width="38" height="21" shapeRendering="crispEdges">
          {[0, 1, 2, 3, 4, 5, 6, 7].map(i => (
            <g key={i}>
              <rect x={i * 5} y="0" width="3" height={14 - Math.round(i * 1.6)} fill="#5a7a0a" />
              <rect x={i * 5} y={16 - Math.round(i * 1.6)} width="3" height={5 + Math.round(i * 1.6)} fill="#961a08" />
            </g>
          ))}
        </svg>
        24731/10 kb
      </Cell>
    </StatusBar>
    <Edge />
  </Page>
);

export default App;
